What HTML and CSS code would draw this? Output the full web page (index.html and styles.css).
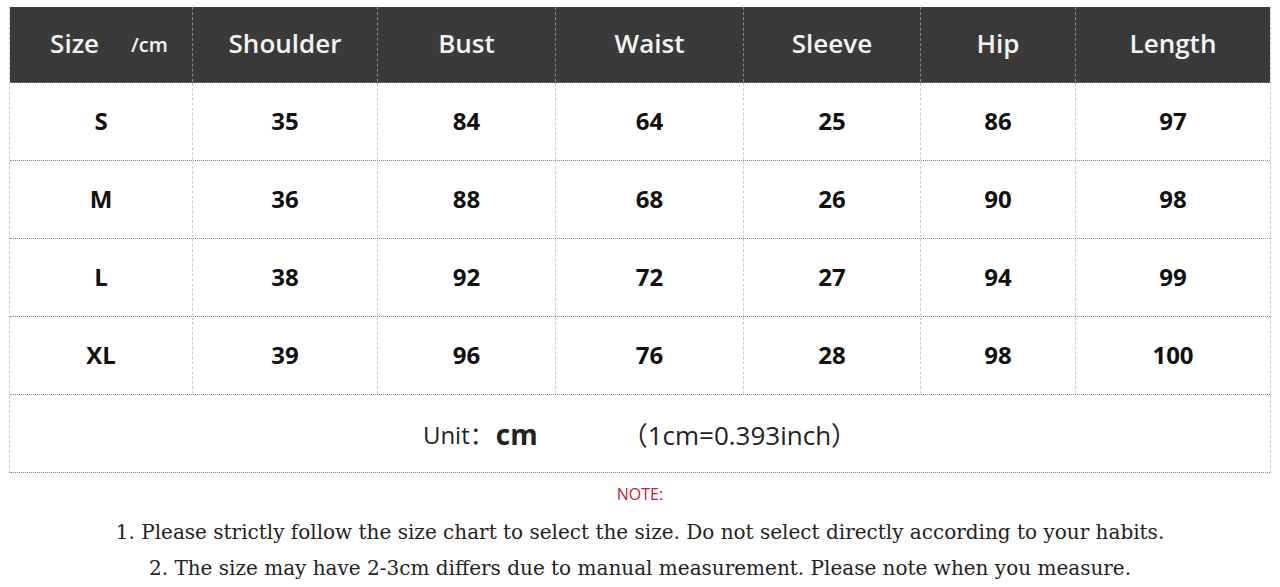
FILE: index.html
```html
<!DOCTYPE html>
<html>
<head>
<meta charset="utf-8">
<link rel="stylesheet" href="styles.css">
</head>
<body>
<div class="chart">
  <div class="row head">
    <div class="cell"><span class="size">Size</span><span class="unit">/cm</span></div>
    <div class="cell">Shoulder</div>
    <div class="cell">Bust</div>
    <div class="cell">Waist</div>
    <div class="cell">Sleeve</div>
    <div class="cell">Hip</div>
    <div class="cell">Length</div>
  </div>
  <div class="row data">
    <div class="cell">S</div><div class="cell">35</div><div class="cell">84</div><div class="cell">64</div><div class="cell">25</div><div class="cell">86</div><div class="cell">97</div>
  </div>
  <div class="row data">
    <div class="cell">M</div><div class="cell">36</div><div class="cell">88</div><div class="cell">68</div><div class="cell">26</div><div class="cell">90</div><div class="cell">98</div>
  </div>
  <div class="row data">
    <div class="cell">L</div><div class="cell">38</div><div class="cell">92</div><div class="cell">72</div><div class="cell">27</div><div class="cell">94</div><div class="cell">99</div>
  </div>
  <div class="row data">
    <div class="cell">XL</div><div class="cell">39</div><div class="cell">96</div><div class="cell">76</div><div class="cell">28</div><div class="cell">98</div><div class="cell">100</div>
  </div>
  <div class="unitrow">
    <span class="unit-label">Unit：</span><span class="unit-cm">cm</span><span class="unit-conv">（1cm=0.393inch）</span>
  </div>
</div>
<div class="notes">
  <p class="note-title">NOTE:</p>
  <p class="note-line first">1. Please strictly follow the size chart to select the size. Do not select directly according to your habits.</p>
  <p class="note-line">2. The size may have 2-3cm differs due to manual measurement. Please note when you measure.</p>
</div>
</body>
</html>
```

FILE: styles.css
```css
html, body {
  margin: 0;
  padding: 0;
  background: #ffffff;
}
body {
  font-family: "Open Sans", "Liberation Sans", sans-serif;
  color: #111;
}
.chart {
  margin: 7px 0 0 9px;
  width: 1262px;
  border-left: 1px dashed #c8c8c8;
  border-right: 1px dashed #c8c8c8;
  box-sizing: border-box;
}
.row {
  display: grid;
  grid-template-columns: 183px 185px 178px 188px 177px 155px 1fr;
}
.cell {
  display: flex;
  align-items: center;
  justify-content: center;
  border-right: 1px dashed #cccccc;
}
.cell:last-child {
  border-right: none;
}
.head {
  height: 76px;
  background: #3a3a3a;
  color: #f4f4f4;
  font-size: 26px;
  font-weight: 600;
  border-bottom: 1px dotted #888;
  box-sizing: border-box;
}
.head .cell {
  border-right: 1px dashed #8a8a8a;
  padding-bottom: 4px;
}
.head .cell:last-child {
  border-right: none;
}
.head .size {
  margin-right: 32px;
  margin-left: 16px;
}
.head .unit {
  font-size: 20px;
  font-weight: 600;
  margin-top: 4px;
}
.data {
  height: 78px;
  font-size: 24px;
  font-weight: 700;
  color: #111;
  border-bottom: 1px dotted #888;
  box-sizing: border-box;
}
.data .cell {
  padding-bottom: 2px;
}
.unitrow {
  height: 78px;
  display: flex;
  align-items: center;
  justify-content: center;
  border-bottom: 1px dotted #888;
  box-sizing: border-box;
  font-family: "Open Sans", "Noto Sans CJK SC", sans-serif;
  font-size: 24px;
  color: #222;
}
.unit-label {
  margin-left: 0;
}
.unit-cm {
  font-size: 28px;
  font-weight: 700;
  margin-left: 2px;
  margin-right: 84px;
}
.unit-conv {
  font-size: 26px;
  margin-right: 0;
}
.notes {
  text-align: center;
}
.notes p {
  margin: 0;
}
.note-title {
  margin-top: 10px !important;
  font-size: 16px;
  color: #c0203a;
  height: 22px;
  line-height: 22px;
}
.note-line {
  font-family: "DejaVu Serif", "Liberation Serif", serif;
  font-size: 20px;
  color: #222;
  line-height: 36px;
  letter-spacing: 0;
}
.note-line.first {
  margin-top: 9px !important;
}
```
